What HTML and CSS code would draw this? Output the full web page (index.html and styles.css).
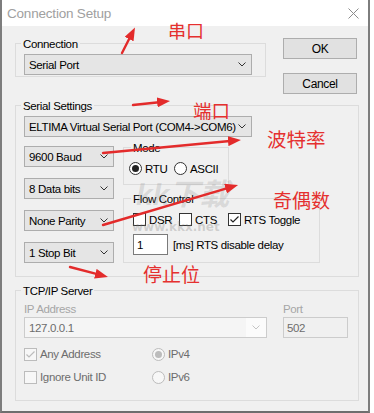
FILE: index.html
```html
<!DOCTYPE html>
<html>
<head>
<meta charset="utf-8">
<link rel="stylesheet" href="styles.css">
</head>
<body>
<div class="window">
  <div class="titlebar">
    <span class="title">Connection Setup</span>
    <svg class="close" width="11" height="11" viewBox="0 0 11 11"><path d="M0.5,0.5 L10.5,10.5 M10.5,0.5 L0.5,10.5" stroke="#8c8c8c" stroke-width="1" fill="none"/></svg>
  </div>
  <div class="content">
    <div class="toprow">
      <div class="group g-conn">
        <span class="legend">Connection</span>
        <div class="combo w-wide"><span class="ctext">Serial Port</span><svg class="chev" width="8" height="5" viewBox="0 0 8 5"><polyline points="0.5,0.5 4,4 7.5,0.5" fill="none" stroke="#333" stroke-width="1"/></svg></div>
      </div>
      <div class="buttons">
        <div class="btn">OK</div>
        <div class="btn">Cancel</div>
      </div>
    </div>

    <div class="group g-serial">
      <span class="legend">Serial Settings</span>
      <div class="combo w-wide"><span class="ctext">ELTIMA Virtual Serial Port (COM4-&gt;COM6)</span><svg class="chev" width="8" height="5" viewBox="0 0 8 5"><polyline points="0.5,0.5 4,4 7.5,0.5" fill="none" stroke="#333" stroke-width="1"/></svg></div>
      <div class="serial-body">
        <div class="col-left">
          <div class="combo w-small"><span class="ctext">9600 Baud</span><svg class="chev" width="8" height="5" viewBox="0 0 8 5"><polyline points="0.5,0.5 4,4 7.5,0.5" fill="none" stroke="#333" stroke-width="1"/></svg></div>
          <div class="combo w-small"><span class="ctext">8 Data bits</span><svg class="chev" width="8" height="5" viewBox="0 0 8 5"><polyline points="0.5,0.5 4,4 7.5,0.5" fill="none" stroke="#333" stroke-width="1"/></svg></div>
          <div class="combo w-small"><span class="ctext">None Parity</span><svg class="chev" width="8" height="5" viewBox="0 0 8 5"><polyline points="0.5,0.5 4,4 7.5,0.5" fill="none" stroke="#333" stroke-width="1"/></svg></div>
          <div class="combo w-small"><span class="ctext">1 Stop Bit</span><svg class="chev" width="8" height="5" viewBox="0 0 8 5"><polyline points="0.5,0.5 4,4 7.5,0.5" fill="none" stroke="#333" stroke-width="1"/></svg></div>
        </div>
        <div class="col-right">
          <div class="group g-mode">
            <span class="legend">Mode</span>
            <div class="optrow">
              <label class="opt w-rtu"><span class="radio on"></span>RTU</label>
              <label class="opt"><span class="radio"></span>ASCII</label>
            </div>
          </div>
          <div class="group g-flow">
            <span class="legend">Flow Control</span>
            <div class="optrow">
              <label class="opt w-dsr"><span class="check"></span>DSR</label>
              <label class="opt w-cts"><span class="check"></span>CTS</label>
              <label class="opt"><span class="check"><svg width="11" height="11" viewBox="0 0 11 11"><polyline points="1.5,5.5 4,8 9.5,2.5" fill="none" stroke="#222" stroke-width="1.2"/></svg></span>RTS Toggle</label>
            </div>
            <div class="delayrow">
              <div class="edit">1</div>
              <span class="delaytext">[ms] RTS disable delay</span>
            </div>
          </div>
        </div>
      </div>
    </div>

    <div class="group g-tcp">
      <span class="legend">TCP/IP Server</span>
      <div class="tcp-grid">
        <span class="dlabel">IP Address</span>
        <span class="dlabel col3">Port</span>
        <div class="combo disabled w-ip"><span class="ctext">127.0.0.1</span><span class="dbtn"><svg width="8" height="5" viewBox="0 0 8 5"><polyline points="0.5,0.5 4,4 7.5,0.5" fill="none" stroke="#c4c4c4" stroke-width="1"/></svg></span></div>
        <div class="edit disabled col3">502</div>
        <label class="opt dis"><span class="check dis"><svg width="11" height="11" viewBox="0 0 11 11"><polyline points="1.5,5.5 4,8 9.5,2.5" fill="none" stroke="#bcbcbc" stroke-width="1.2"/></svg></span>Any Address</label>
        <label class="opt dis"><span class="radio dis on"></span>IPv4</label>
        <span></span>
        <label class="opt dis"><span class="check dis"></span>Ignore Unit ID</label>
        <label class="opt dis"><span class="radio dis"></span>IPv6</label>
      </div>
    </div>
  </div>
</div>

<div class="watermark">
  <span class="wm-logo">kk下载</span>
  <span class="wm-url">www.kkx.net</span>
</div>

<svg class="arrows" width="374" height="413" viewBox="0 0 374 413">
  <defs>
    <marker id="ah" viewBox="0 0 13 10" refX="2" refY="5" markerWidth="13" markerHeight="10" markerUnits="userSpaceOnUse" orient="auto">
      <path d="M0,0 L13,5 L0,10 z" fill="#e32b2b"/>
    </marker>
  </defs>
  <g stroke="#e32b2b" stroke-width="2.4" stroke-linecap="round" fill="none" marker-end="url(#ah)">
    <line x1="122" y1="53" x2="130" y2="37.3"/>
    <line x1="133" y1="105" x2="159.1" y2="102.2"/>
    <line x1="103" y1="153" x2="230" y2="141"/>
    <line x1="103" y1="225" x2="227.5" y2="188.1"/>
    <line x1="70" y1="267" x2="97.3" y2="274.2"/>
  </g>
</svg>

<span class="note n1">串口</span>
<span class="note n2">端口</span>
<span class="note n3">波特率</span>
<span class="note n4">奇偶数</span>
<span class="note n5">停止位</span>
</body>
</html>
```

FILE: styles.css
```css
* { box-sizing: border-box; }

body {
  margin: 0;
  background: #ffffff;
  position: relative;
  width: 374px;
  height: 413px;
  overflow: hidden;
  font-family: "Liberation Sans", Arial, sans-serif;
  font-size: 11.5px;
  letter-spacing: -0.35px;
  color: #000;
}

.window {
  width: 370px;
  height: 413px;
  background: #f0f0f0;
  border-left: 2px solid #7d7d7d;
  border-right: 2px solid #7d7d7d;
  border-bottom: 2px solid #6e6e6e;
  display: flex;
  flex-direction: column;
}

.titlebar {
  height: 26px;
  flex: none;
  background: #fff;
  display: flex;
  align-items: center;
  justify-content: space-between;
  padding: 0 9px 0 5px;
}

.title {
  font-family: "Liberation Sans", Arial, sans-serif;
  font-size: 13.5px;
  letter-spacing: -0.2px;
  color: #a0a0a0;
}

.close { display: block; margin-top: 1px; }

.content {
  padding-left: 13px;
}

.toprow {
  display: flex;
  align-items: flex-start;
}

.group {
  border: 1px solid #dcdcdc;
}

.legend {
  display: block;
  width: max-content;
  height: 14px;
  line-height: 14px;
  margin: -7px 0 0 -3px;
  padding: 0 2px;
  background: #f0f0f0;
  white-space: nowrap;
}

.g-conn {
  margin-top: 17px;
  width: 251px;
  padding: 0 8px 1px 8px;
}

.combo {
  height: 21px;
  margin-top: 3px;
  border: 1px solid #adadad;
  background: #e5e5e5;
  display: flex;
  align-items: center;
  justify-content: space-between;
  padding: 0 5px 0 4px;
  white-space: nowrap;
}

.ctext { line-height: 14px; }
.chev { display: block; flex: none; }

.w-wide { width: 228px; }
.w-small { width: 90px; margin-top: 0; }

.buttons {
  margin: 12px 0 0 17px;
  display: flex;
  flex-direction: column;
  gap: 14px;
}

.btn {
  width: 74px;
  height: 21px;
  border: 1px solid #adadad;
  background: #e1e1e1;
  display: flex;
  align-items: center;
  justify-content: center;
  font-size: 12px;
}

.g-serial {
  margin-top: 11px;
  width: 344px;
  padding: 0 8px 13px 8px;
}

.serial-body {
  display: flex;
  align-items: flex-start;
  gap: 9px;
  margin-top: 9px;
}

.col-left {
  display: flex;
  flex-direction: column;
  gap: 11px;
}

.col-right {
  display: flex;
  flex-direction: column;
}

.g-mode {
  margin-top: 1px;
  width: 106px;
  padding: 0 0 9px 5px;
}

.g-mode .legend { margin-left: 2px; }

.optrow {
  display: flex;
  align-items: center;
  margin-top: 7px;
  height: 13px;
}

.opt {
  display: flex;
  align-items: center;
  gap: 3px;
  white-space: nowrap;
  line-height: 14px;
}

.w-rtu { width: 45px; }
.w-dsr { width: 46px; }
.w-cts { width: 49px; }

.radio {
  width: 13px;
  height: 13px;
  flex: none;
  border: 1px solid #333;
  border-radius: 50%;
  background: #fff;
  display: flex;
  align-items: center;
  justify-content: center;
}

.radio.on::after {
  content: "";
  width: 7px;
  height: 7px;
  border-radius: 50%;
  background: #222;
}

.check {
  width: 13px;
  height: 13px;
  flex: none;
  border: 1px solid #333;
  background: #fff;
  display: flex;
  align-items: center;
  justify-content: center;
}

.check svg { display: block; }

.g-flow {
  margin-top: 13px;
  width: 197px;
  padding: 0 0 7px 9px;
}

.g-flow .legend { margin-left: -2px; }

.delayrow {
  display: flex;
  align-items: center;
  margin-top: 8px;
}

.edit {
  width: 35px;
  height: 21px;
  border: 1px solid #7a7a7a;
  background: #fff;
  padding-left: 3px;
  display: flex;
  align-items: center;
}

.delaytext { margin-left: 5px; }

.g-tcp {
  margin-top: 13px;
  width: 344px;
  padding: 0 8px 16px 8px;
}

.tcp-grid {
  display: grid;
  grid-template-columns: 128px 131px 65px;
  grid-template-rows: 15px 21px 23px 23px;
  margin-top: 4px;
}

.tcp-grid > .opt { align-self: end; height: 14px; }

.dlabel {
  color: #a6a6a6;
  line-height: 14px;
  align-self: start;
}

.col3 { grid-column: 3; }

.combo.disabled {
  margin-top: 0;
  border-color: #cccccc;
  background: #f5f5f5;
  color: #6d6d6d;
  padding: 0;
  grid-column: 1 / span 2;
}

.combo.disabled .ctext { padding-left: 4px; }

.w-ip { width: 243px; }

.dbtn {
  width: 20px;
  height: 19px;
  background: #fbfbfb;
  display: flex;
  align-items: center;
  justify-content: center;
}

.edit.disabled {
  width: 65px;
  border-color: #cccccc;
  background: #f0f0f0;
  color: #6d6d6d;
}

.opt.dis { color: #6d6d6d; }

.check.dis, .radio.dis {
  border-color: #bcbcbc;
  background: #f7f7f7;
}

.radio.dis.on::after { background: #bcbcbc; }

.watermark {
  position: absolute;
  left: 0;
  top: 0;
  pointer-events: none;
  letter-spacing: 0;
}

.wm-logo {
  position: absolute;
  left: 136px;
  top: 178px;
  font-family: "Liberation Sans", "Noto Sans CJK SC", sans-serif;
  font-weight: bold;
  font-style: italic;
  font-size: 30px;
  line-height: 34px;
  color: rgba(120, 120, 120, 0.2);
  white-space: nowrap;
}

.wm-url {
  position: absolute;
  left: 132px;
  top: 220px;
  font-family: "DejaVu Sans", sans-serif;
  font-weight: bold;
  font-size: 12px;
  line-height: 14px;
  color: rgba(120, 120, 120, 0.28);
  white-space: nowrap;
}

.arrows {
  position: absolute;
  left: 0;
  top: 0;
  pointer-events: none;
}

.note {
  position: absolute;
  font-family: "Noto Sans CJK SC", sans-serif;
  color: #e5302f;
  line-height: 1;
  letter-spacing: 0;
  white-space: nowrap;
}

.n1 { left: 168px; top: 21px; font-size: 18px; }
.n2 { left: 193px; top: 101px; font-size: 18.5px; }
.n3 { left: 267px; top: 129px; font-size: 19.5px; }
.n4 { left: 273px; top: 190px; font-size: 19px; }
.n5 { left: 143px; top: 264px; font-size: 19px; }
```
